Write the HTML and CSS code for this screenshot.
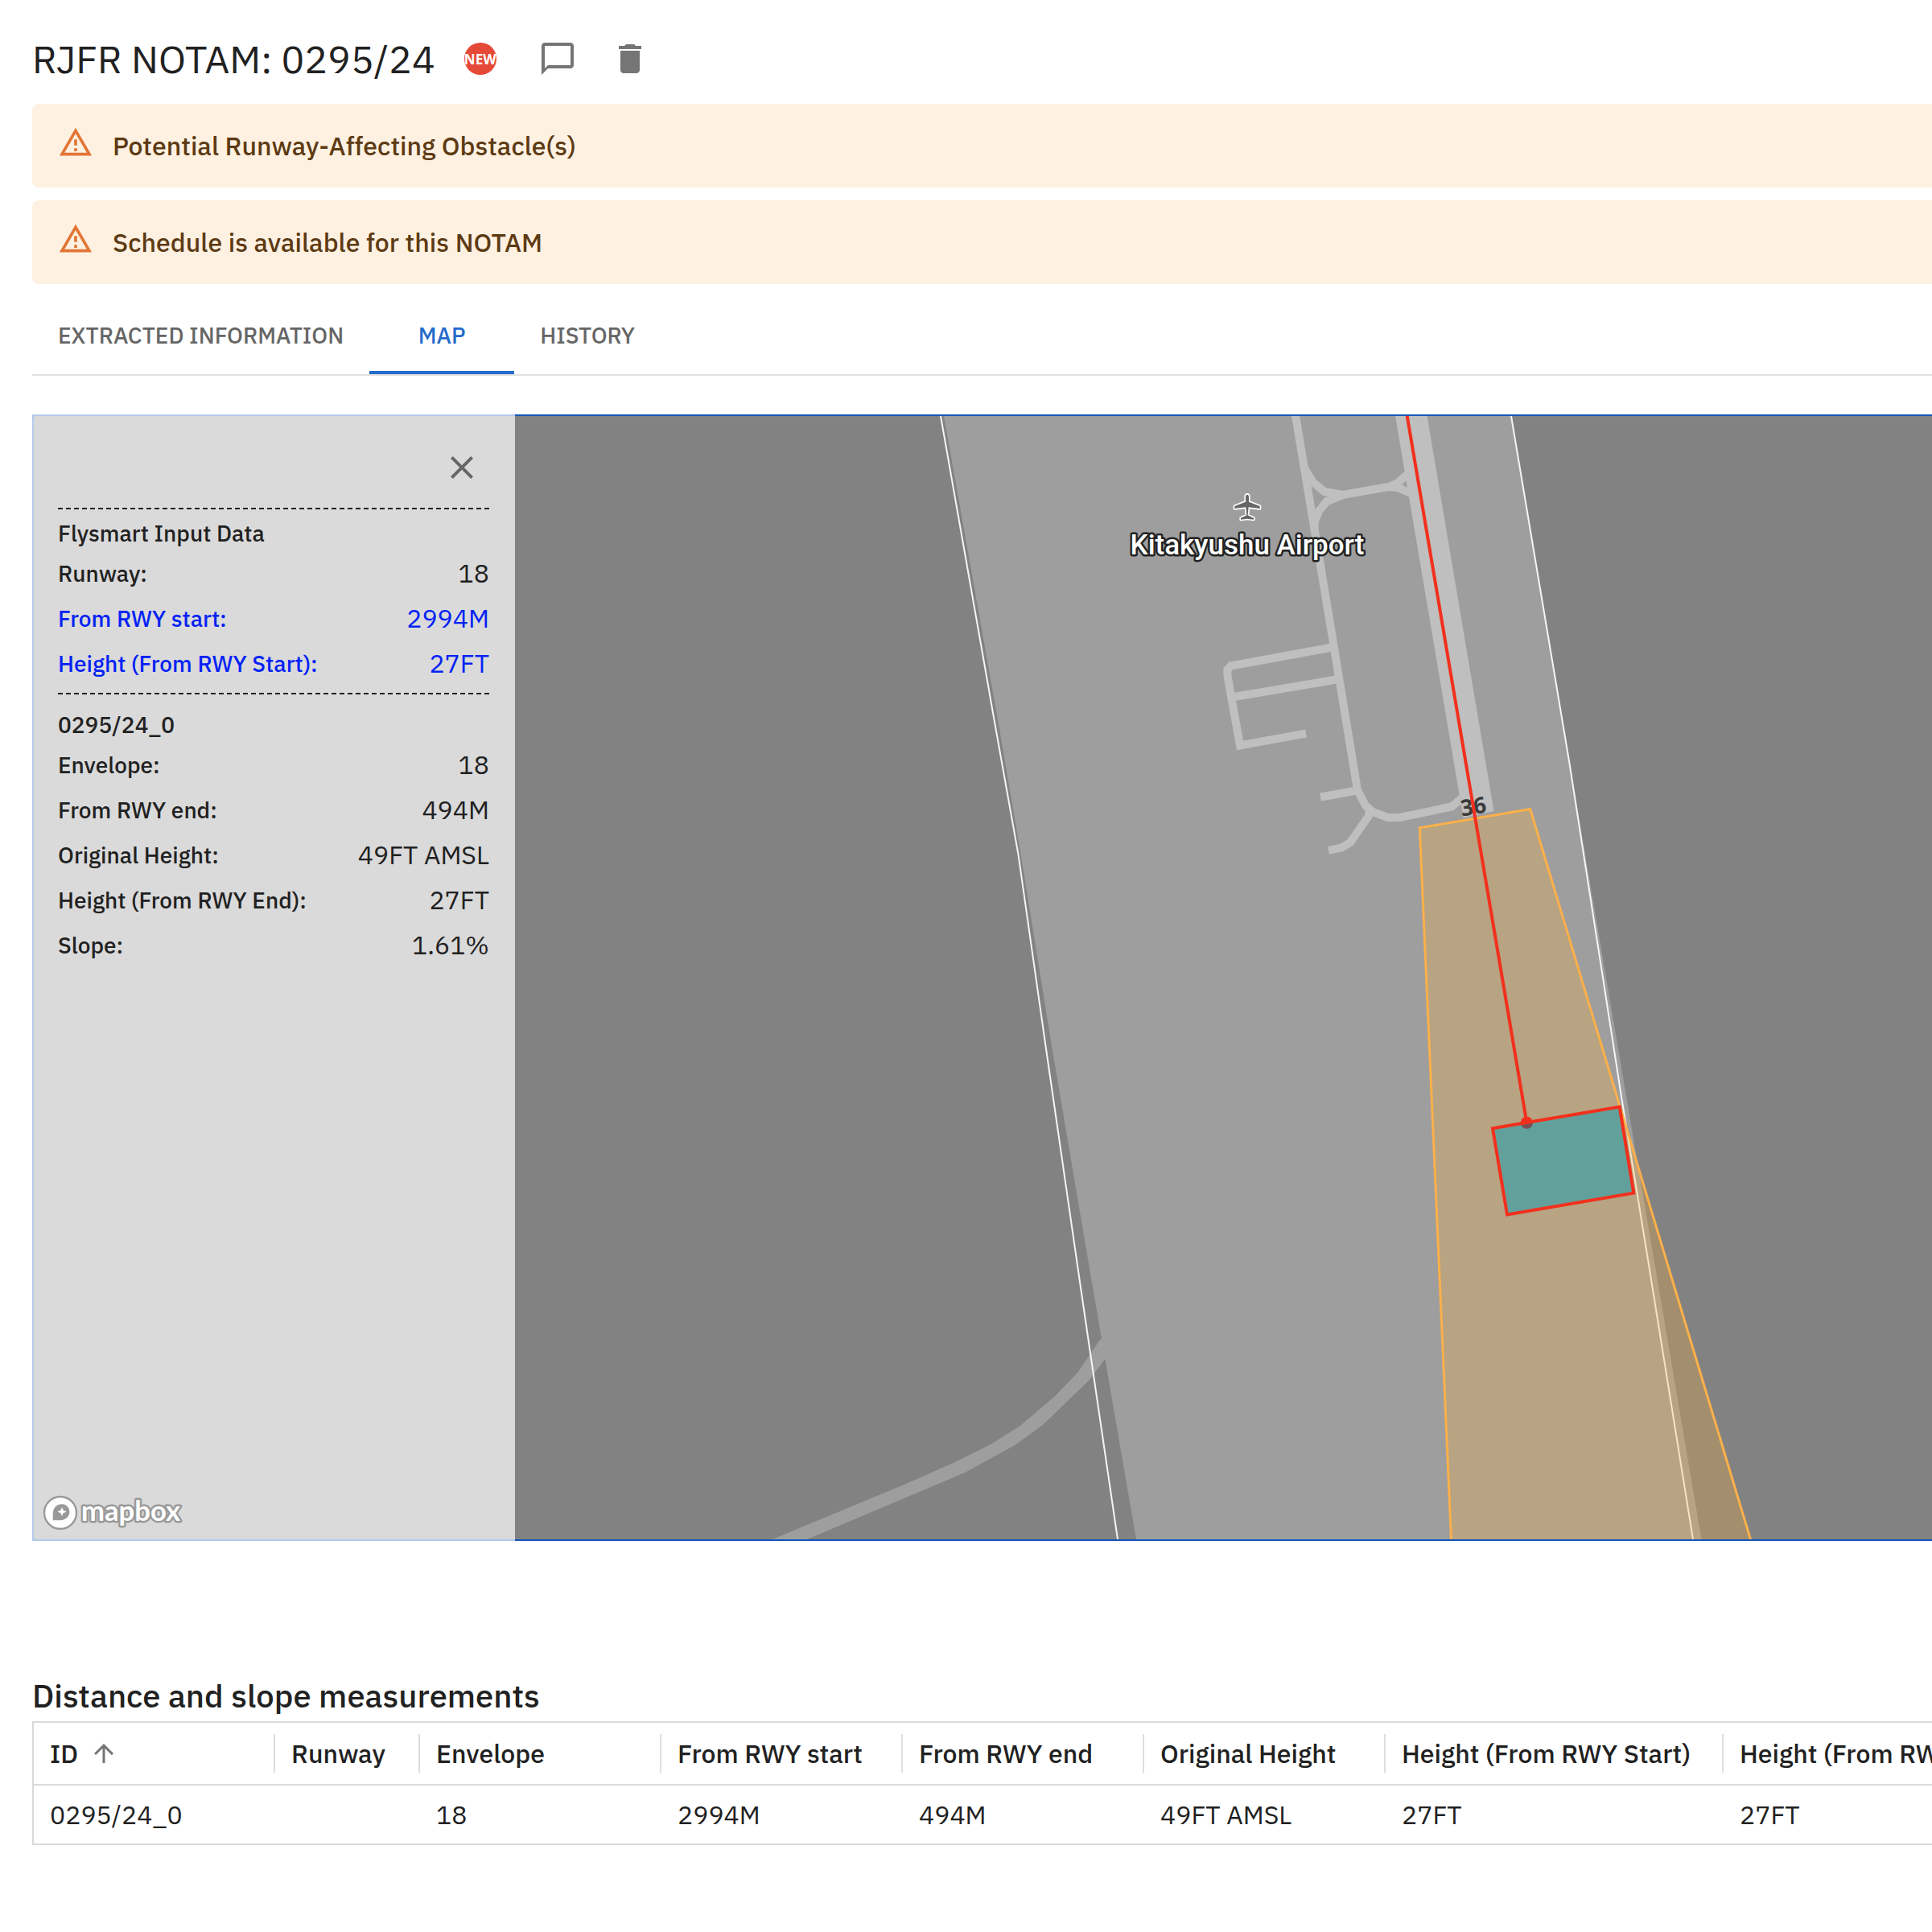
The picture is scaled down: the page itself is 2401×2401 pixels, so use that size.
FILE: index.html
```html
<!DOCTYPE html>
<html lang="en">
<head>
<meta charset="utf-8">
<meta name="viewport" content="width=device-width, initial-scale=1">
<title>RJFR NOTAM: 0295/24</title>
<link rel="stylesheet" href="styles.css">
</head>
<body>
<main class="page">
  <header class="header">
    <h1 class="title">RJFR NOTAM: 0295/24</h1>
    <span class="badge">NEW</span>
    <div class="actions">
      <button class="icon-button" type="button" aria-label="Comment">
        <svg class="icon" viewBox="0 0 24 24"><path d="M20 2H4c-1.100 0-2 .9-2 2v18l4-4h14c1.100 0 2-.9 2-2V4c0-1.100-.9-2-2-2zm0 14H6l-2 2V4h16v12z"/></svg>
      </button>
      <button class="icon-button" type="button" aria-label="Delete">
        <svg class="icon" viewBox="0 0 24 24"><path d="M6 19c0 1.100.9 2 2 2h8c1.100 0 2-.9 2-2V7H6v12zM19 4h-3.500l-1-1h-5l-1 1H5v2h14V4z"/></svg>
      </button>
    </div>
  </header>

  <div class="alerts">
    <div class="alert" role="alert">
      <svg class="alert-icon" viewBox="0 0 24 24" aria-hidden="true"><path d="M12 5.990L19.530 19H4.470L12 5.990M12 2L1 21h22L12 2zm1 14h-2v2h2v-2zm0-6h-2v4h2v-4z"/></svg>
      <p class="alert-text">Potential Runway-Affecting Obstacle(s)</p>
    </div>
    <div class="alert" role="alert">
      <svg class="alert-icon" viewBox="0 0 24 24" aria-hidden="true"><path d="M12 5.990L19.530 19H4.470L12 5.990M12 2L1 21h22L12 2zm1 14h-2v2h2v-2zm0-6h-2v4h2v-4z"/></svg>
      <p class="alert-text">Schedule is available for this NOTAM</p>
    </div>
  </div>

  <div class="tabs" role="tablist">
    <button class="tab" type="button" role="tab" aria-selected="false">EXTRACTED INFORMATION</button>
    <button class="tab tab-active" type="button" role="tab" aria-selected="true">MAP</button>
    <button class="tab" type="button" role="tab" aria-selected="false">HISTORY</button>
  </div>

  <section class="map" aria-label="Map">
    <aside class="panel-frame">
      <div class="panel">
        <button class="close" type="button" aria-label="Close">
          <svg class="icon" viewBox="0 0 24 24"><path d="M19 6.410L17.590 5 12 10.590 6.410 5 5 6.410 10.590 12 5 17.590 6.410 19 12 13.410 17.590 19 19 17.590 13.410 12z"/></svg>
        </button>
        <section class="group">
          <h2 class="group-title">Flysmart Input Data</h2>
          <dl class="rows">
            <div class="row"><dt>Runway:</dt><dd>18</dd></div>
            <div class="row row-accent"><dt>From RWY start:</dt><dd>2994M</dd></div>
            <div class="row row-accent"><dt>Height (From RWY Start):</dt><dd>27FT</dd></div>
          </dl>
        </section>
        <section class="group group-obstacle">
          <h2 class="group-title">0295/24_0</h2>
          <dl class="rows">
            <div class="row"><dt>Envelope:</dt><dd>18</dd></div>
            <div class="row"><dt>From RWY end:</dt><dd>494M</dd></div>
            <div class="row"><dt>Original Height:</dt><dd>49FT AMSL</dd></div>
            <div class="row"><dt>Height (From RWY End):</dt><dd>27FT</dd></div>
            <div class="row"><dt>Slope:</dt><dd>1.61%</dd></div>
          </dl>
        </section>
        <a class="logo" href="#" aria-label="Mapbox">
          <svg class="logo-art" viewBox="156 110 528 138">
            <circle cx="225" cy="179" r="60" fill="#fff" stroke="#999" stroke-width="7"/>
            <path d="M197 207v-22c0-24 14-38 34-38 17 0 28 13 28 28 0 20-16 32-40 32z" fill="#999"/>
            <path d="M231 158l5 12 12 5-12 5-5 12-5-12-12-5 12-5z" fill="#fff"/>
            <text class="logo-text" x="303" y="208">mapbox</text>
          </svg>
        </a>
      </div>
    </aside>
    <div class="canvas">
      <svg class="chart" viewBox="640 517 1761 1396" preserveAspectRatio="xMinYMin slice">
        <!-- land and causeway -->
        <path class="land" d="M1173 517L1241 900L1269 1064L1307 1300L1358 1600L1412 1913H2114.500L1877.500 517z"/>
        <path class="land" d="M1367.700 1664L1339 1706L1311.400 1734.700L1267.400 1772.300L1229.900 1795.700L1187 1817L1125.800 1844L960 1913H1003L1199.300 1830L1261.700 1795.700L1296 1770.700L1352.700 1716L1374 1688L1390 1700V1664z"/>
        <!-- runway and taxiways -->
        <path class="runway" d="M1734 517L1818.500 1016.500L1856.500 1008L1773.500 517z"/>
        <g class="taxiway">
          <path d="M1610 516L1657.500 802L1687 982L1697 1001L1706 1009L1725 1016H1739.500L1804 1002.500L1820 989"/>
          <path d="M1641 990.500L1689 982"/>
          <path d="M1702 1005L1701 1014L1678 1047L1668 1053L1651 1057"/>
          <path d="M1620 580L1632 599.500L1646 611L1669 615L1726 605L1737 600L1752 587"/>
          <path d="M1726 605L1738.600 606.400L1757 615"/>
          <path d="M1633 660L1634 648L1639 635L1649 623L1669 615"/>
          <path d="M1530 827.500L1658 804"/>
          <path d="M1534 866L1661 844.500"/>
          <path d="M1532 825L1525.500 832V840L1541 926.500L1623 911.500"/>
        </g>
        <!-- coastline -->
        <path class="coast" d="M1169 517L1236.500 900L1265.500 1062L1299.500 1300L1343 1600L1389 1913"/>
        <path class="coast" d="M1878 517L1950.700 950L2015 1363L2045.500 1550L2104 1913"/>
        <!-- airport -->
        <g transform="translate(1500 590) scale(.3333)">
          <path class="plane" d="M150 74c-4 0-6 4-6 8v19l-41 16v9l42-5 3 30-22 10v6l24-3 24 3v-6l-22-10 3-30 42 5v-9l-41-16V82c0-4-2-8-6-8z"/>
        </g>
        <text class="place" x="1550" y="689">Kitakyushu Airport</text>
        <!-- take-off envelope -->
        <path class="envelope" d="M1764.300 1028.800L1901.700 1005.500L2177 1918H1803.700z"/>
        <text class="runway-number" x="1831" y="1012" transform="rotate(-9 1831 1002)">36</text>
        <path class="track" d="M1748.400 515L1897.300 1395"/>
        <!-- obstacle area -->
        <circle class="fix" cx="1897.300" cy="1395" r="7.500"/>
        <path class="obstacle" d="M1855 1402.300L2012.700 1375.600L2030.300 1482.700L1873 1509.500z"/>
        <path class="fix-shade" d="M1889.900 1396.500a7.500 7.500 0 0 0 14.900-2.500z"/>
        <path class="obstacle-line" d="M1855 1402.300L2012.700 1375.600L2030.300 1482.700L1873 1509.500z"/>
      </svg>
    </div>
  </section>

  <section class="measurements">
    <h2 class="section-title" id="measurements-title">Distance and slope measurements</h2>
    <div class="table-frame">
      <table class="table" aria-labelledby="measurements-title">
        <colgroup>
          <col class="col-medium"><col class="col-small"><col class="col-medium"><col class="col-medium"><col class="col-medium"><col class="col-medium"><col class="col-large"><col class="col-large">
        </colgroup>
        <thead>
          <tr>
            <th scope="col"><span class="sorted">ID <svg class="sort-icon" viewBox="0 0 24 24" aria-hidden="true"><path d="M4 12l1.410 1.410L11 7.830V20h2V7.830l5.580 5.590L20 12l-8-8-8 8z"/></svg></span></th>
            <th scope="col">Runway</th>
            <th scope="col">Envelope</th>
            <th scope="col">From RWY start</th>
            <th scope="col">From RWY end</th>
            <th scope="col">Original Height</th>
            <th scope="col">Height (From RWY Start)</th>
            <th scope="col">Height (From RWY End)</th>
          </tr>
        </thead>
        <tbody>
          <tr>
            <td>0295/24_0</td><td></td><td>18</td><td>2994M</td><td>494M</td><td>49FT AMSL</td><td>27FT</td><td>27FT</td>
          </tr>
        </tbody>
      </table>
    </div>
  </section>
</main>
</body>
</html>
```
FILE: styles.css
```css
* {
  box-sizing: border-box;
  margin: 0;
  padding: 0;
}

body {
  background: #fff;
  color: #212121;
  font-family: "IBM Plex Sans", "Open Sans", "Liberation Sans", sans-serif;
  font-size: 32px;
  overflow-x: hidden;
}

button {
  border: 0;
  background: none;
  font: inherit;
  color: inherit;
  cursor: pointer;
}

.page {
  padding: 41px 0 108px 40px;
}

.header {
  display: flex;
  align-items: center;
  gap: 36px;
}

.title {
  font-size: 48px;
  font-weight: 400;
  line-height: 64px;
}

.badge {
  display: flex;
  align-items: center;
  justify-content: center;
  width: 40px;
  height: 40px;
  border-radius: 50%;
  background: #e54937;
  color: #fff;
  font-family: "Noto Sans", "Open Sans", sans-serif;
  font-size: 17px;
  font-weight: 700;
}

.actions {
  display: flex;
  gap: 10px;
}

.icon-button {
  display: flex;
  padding: 8px 16px;
}

.icon {
  width: 48px;
  height: 48px;
  fill: #757575;
}

.alerts {
  display: grid;
  gap: 16px;
  margin-top: 24px;
}

.alert {
  display: flex;
  gap: 24px;
  padding: 26px 32px;
  border-radius: 8px 0 0 8px;
  background: #fef1e1;
  color: #5d3a13;
}

.alert-icon {
  width: 44px;
  height: 44px;
  fill: #e27636;
}

.alert-text {
  font-weight: 500;
  line-height: 52px;
}

.tabs {
  display: flex;
  margin-top: 16px;
  border-bottom: 2px solid #e0e0e0;
}

.tab {
  min-width: 180px;
  height: 96px;
  padding: 0 32px 2px;
  color: #666;
  font-size: 28px;
  font-weight: 500;
}

.tab-active {
  color: #256bcb;
  box-shadow: inset 0 -4px #256bcb;
}

.map {
  display: flex;
  height: 1400px;
  margin-top: 48px;
}

.panel-frame {
  flex: none;
  width: 600px;
  padding: 2px 0 2px 2px;
  background: #b5caea;
}

.panel {
  position: relative;
  height: 100%;
  padding: 30px 32px 0 30px;
  border-radius: 4px 0 0 4px;
  background: #dadada;
}

.close {
  display: flex;
  margin: 0 0 16px auto;
  padding: 10px;
}

.close .icon {
  fill: #666;
}

.group {
  padding: 8px 0 9px;
  border-top: 2px dashed #212121;
}

.group-obstacle {
  padding-top: 16px;
}

.group-title {
  font-size: 28px;
  font-weight: 500;
  line-height: 43px;
}

.row {
  display: flex;
  align-items: center;
  justify-content: space-between;
  height: 56px;
}

.row dt {
  font-size: 28px;
  font-weight: 500;
}

.row-accent {
  color: #0422f5;
}

.logo {
  position: absolute;
  left: 10px;
  bottom: 10px;
}

.logo-art {
  display: block;
  width: 176px;
  height: 46px;
  overflow: visible;
}

.logo-text {
  font-family: Lato, "Open Sans", sans-serif;
  font-size: 104px;
  font-weight: 700;
  fill: #fff;
  stroke: #999;
  stroke-width: 15px;
  stroke-linejoin: round;
  paint-order: stroke;
}

.canvas {
  flex: 1;
  min-width: 0;
  border: solid #1557b8;
  border-width: 2px 0;
  background: #828282;
}

.chart {
  display: block;
  width: 100%;
  height: 100%;
}

.land {
  fill: #9e9e9e;
}

.runway {
  fill: #bfbfbf;
}

.taxiway {
  fill: none;
  stroke: #bfbfbf;
  stroke-width: 10px;
}

.coast {
  fill: none;
  stroke: #f5f5f5;
  stroke-width: 2px;
}

.plane {
  fill: #666;
  stroke: #fff;
  stroke-width: 10px;
  stroke-linejoin: round;
  paint-order: stroke;
}

.place {
  font-family: Roboto, "Open Sans", sans-serif;
  font-size: 35px;
  font-weight: 500;
  text-anchor: middle;
  fill: #fff;
  stroke: #222;
  stroke-width: 5px;
  stroke-linejoin: round;
  paint-order: stroke;
}

.envelope {
  fill: rgba(251, 176, 59, .28);
  stroke: #fbb04a;
  stroke-width: 3px;
}

.runway-number {
  font-family: "Open Sans", "Noto Sans", sans-serif;
  font-size: 28px;
  font-weight: 700;
  text-anchor: middle;
  fill: #3b3b3b;
}

.track,
.obstacle-line {
  fill: none;
  stroke: #f2301d;
  stroke-width: 4px;
}

.fix {
  fill: #f2301d;
}

.obstacle {
  fill: #62a19b;
}

.fix-shade {
  fill: #7b4f57;
}

.measurements {
  margin-top: 160px;
}

.section-title {
  font-size: 40px;
  font-weight: 500;
  line-height: 64px;
}

.table-frame {
  overflow: hidden;
  border: solid #dadada;
  border-width: 2px 0 2px 2px;
}

.table {
  width: 2520px;
  border-collapse: collapse;
  table-layout: fixed;
  text-align: left;
}

.col-small {
  width: 180px;
}

.col-medium {
  width: 300px;
}

.col-large {
  width: 420px;
}

.table th {
  height: 77px;
  padding: 0 20px;
  border-bottom: 2px solid #dadada;
  background: linear-gradient(#dedede, #dedede) no-repeat right center / 2px 48px;
  font-weight: 500;
  white-space: nowrap;
}

.table td {
  height: 73px;
  padding: 0 20px;
}

.sorted {
  display: flex;
  align-items: center;
  gap: 14px;
}

.sort-icon {
  width: 36px;
  height: 36px;
  fill: #757575;
}
```
